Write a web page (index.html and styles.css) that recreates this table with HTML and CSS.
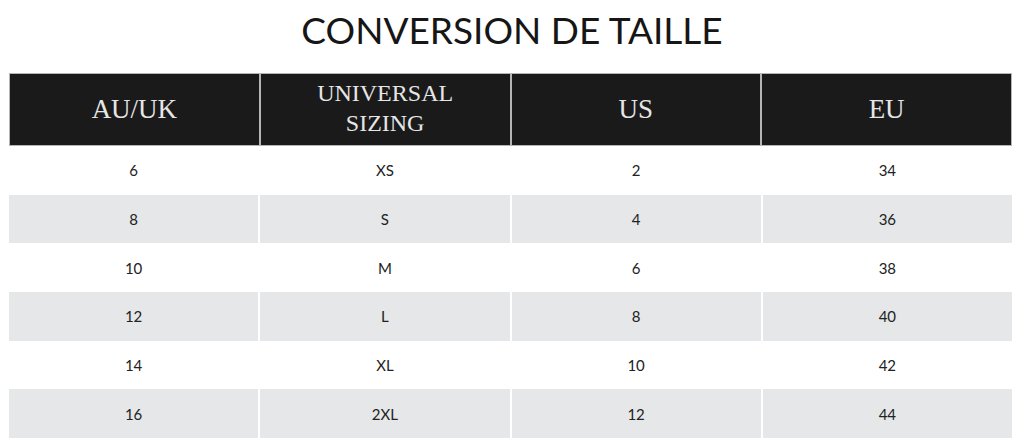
FILE: index.html
```html
<!DOCTYPE html>
<html>
<head>
<meta charset="utf-8">
<link rel="stylesheet" href="styles.css">
</head>
<body>
<h1 class="title">CONVERSION DE TAILLE</h1>
<div class="chart">
  <div class="row head">
    <div class="cell">AU/UK</div>
    <div class="cell small">UNIVERSAL<br>SIZING</div>
    <div class="cell">US</div>
    <div class="cell">EU</div>
  </div>
  <div class="row"><div class="cell">6</div><div class="cell">XS</div><div class="cell">2</div><div class="cell">34</div></div>
  <div class="row alt"><div class="cell">8</div><div class="cell">S</div><div class="cell">4</div><div class="cell">36</div></div>
  <div class="row"><div class="cell">10</div><div class="cell">M</div><div class="cell">6</div><div class="cell">38</div></div>
  <div class="row alt"><div class="cell">12</div><div class="cell">L</div><div class="cell">8</div><div class="cell">40</div></div>
  <div class="row"><div class="cell">14</div><div class="cell">XL</div><div class="cell">10</div><div class="cell">42</div></div>
  <div class="row alt"><div class="cell">16</div><div class="cell">2XL</div><div class="cell">12</div><div class="cell">44</div></div>
</div>
</body>
</html>
```
FILE: styles.css
```css
html, body {
  margin: 0;
  padding: 0;
  background: #fff;
}
.title {
  margin: 0;
  height: 73px;
  line-height: 60px;
  text-align: center;
  font-family: Lato, "Liberation Sans", sans-serif;
  font-weight: 400;
  font-size: 37px;
  color: #161616;
  letter-spacing: 0;
}
.chart {
  margin: 0 12px 0 9px;
  display: flex;
  flex-direction: column;
}
.row {
  display: grid;
  grid-template-columns: 1fr 1fr 1fr 1fr;
  column-gap: 2px;
  height: 48.67px;
}
.row .cell {
  display: flex;
  align-items: center;
  justify-content: center;
  font-family: Lato, "Liberation Sans", sans-serif;
  font-size: 15px;
  color: #222;
}
.row.alt .cell {
  background: #e5e7e8;
}
.row.head {
  height: 73px;
  column-gap: 0;
}
.row.head .cell {
  background: #1a1a1a;
  border: 1px solid #b5b5b5;
  font-family: "Liberation Serif", "DejaVu Serif", serif;
  font-size: 27px;
  color: #e6e6e6;
  text-align: center;
}
.row.head .cell.small {
  font-size: 24px;
  line-height: 30px;
  padding-bottom: 4px;
}
```
